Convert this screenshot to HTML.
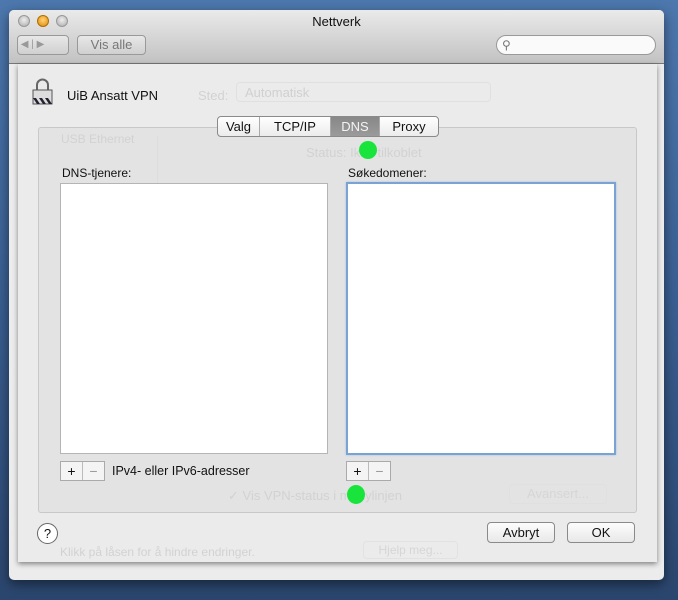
<!DOCTYPE html><html><head><meta charset="utf-8"><style>
*{box-sizing:border-box}body{margin:0;width:678px;height:600px;overflow:hidden;background:linear-gradient(#4d78ae,#3a5f92 50%,#2b466e);font-family:"Liberation Sans",sans-serif;font-size:12px;color:#111;position:relative}
.a{position:absolute}
.win{left:9px;top:10px;width:655px;height:570px;background:#ececec;border-radius:5px;overflow:hidden;box-shadow:0 4px 12px rgba(0,0,0,.5)}
.tb{left:0;top:0;width:655px;height:54px;background:linear-gradient(#eaeaea,#c2c2c2);border-bottom:1px solid #777}
.dot{width:12px;height:12px;border-radius:50%;top:5px;background:radial-gradient(circle at 50% 40%,#eee,#aaa);border:1px solid #999}
.btn{background:linear-gradient(#fdfdfd,#e8e8e8);border:1px solid #8a8a8a;border-radius:4px;text-align:center}
.faint{color:#d2d2d2}
</style></head><body>
<div class="a win">
 <div class="a tb">
  <div class="a dot" style="left:9px"></div>
  <div class="a dot" style="left:28px;background:radial-gradient(circle at 50% 40%,#ffd27a,#e08a00);border-color:#b06d00"></div>
  <div class="a dot" style="left:47px"></div>
  <div class="a" style="left:0;width:655px;top:4px;text-align:center;font-size:13px">Nettverk</div>
  <div class="a" style="left:8px;top:25px;width:52px;height:20px;border:1px solid #999;border-radius:4px;background:linear-gradient(#e8e8e8,#d0d0d0);color:#999;font-size:10px;line-height:18px">&nbsp;◀ | ▶</div>
  <div class="a" style="left:68px;top:25px;width:69px;height:20px;border:1px solid #999;border-radius:4px;background:linear-gradient(#e8e8e8,#d0d0d0);color:#777;font-size:13px;line-height:18px;text-align:center">Vis alle</div>
  <div class="a" style="left:487px;top:25px;width:160px;height:20px;border:1px solid #999;border-radius:10px;background:#fafafa;color:#777;font-size:12px;line-height:18px;padding-left:5px">⚲</div>
 </div>
 <div class="a" style="left:9px;top:54px;width:639px;height:498px;background:#ebebeb;box-shadow:0 2px 5px rgba(0,0,0,.45)">
  <div class="a" style="left:14px;top:13px;width:21px;height:27px">
   <svg width="21" height="28"><path d="M5 13V8a5.5 5.5 0 0 1 11 0v5" fill="none" stroke="#666" stroke-width="2"/><rect x="1" y="13" width="19" height="14" fill="#ddd" stroke="#555"/><path d="M1 21l4 6h3l-4-6zm6 0l4 6h3l-4-6zm6 0l4 6h3l-4-6z" fill="#223"/></svg>
  </div>
  <div class="a" style="left:49px;top:24px;font-size:13px">UiB Ansatt VPN</div>
  <div class="a faint" style="left:180px;top:24px;font-size:13px">Sted:</div>
  <div class="a" style="left:218px;top:18px;width:255px;height:20px;border:1px solid #e0e0e0;border-radius:4px;color:#d0d0d0;font-size:13px;padding:2px 8px">Automatisk</div>
  <div class="a" style="left:20px;top:63px;width:599px;height:386px;background:#e3e3e3;border:1px solid #c8c8c8;border-radius:3px"></div>
  <div class="a faint" style="left:43px;top:68px;font-size:12px">USB Ethernet</div>
  <div class="a" style="left:20px;top:72px;width:120px;height:153px;border-right:1px solid #ddd"></div>
  <div class="a" style="left:199px;top:52px;width:222px;height:21px;border:1px solid #8a8a8a;border-radius:4px;background:linear-gradient(#fff,#ececec);display:flex;font-size:13px;line-height:19px;overflow:hidden">
   <div style="width:42px;text-align:center;border-right:1px solid #aaa">Valg</div>
   <div style="width:71px;text-align:center;border-right:1px solid #aaa">TCP/IP</div>
   <div style="width:48px;text-align:center;background:linear-gradient(#888,#9a9a9a);color:#f4f4f4">DNS</div>
   <div style="flex:1;text-align:center;border-left:1px solid #aaa">Proxy</div>
  </div>
  <div class="a faint" style="left:288px;top:81px;font-size:13px">Status: Ikke tilkoblet</div>
  <div class="a" style="left:44px;top:102px;font-size:12px">DNS-tjenere:</div>
  <div class="a" style="left:330px;top:102px;font-size:12px">Søkedomener:</div>
  <div class="a" style="left:42px;top:119px;width:268px;height:271px;background:#fff;border:1px solid #b5b5b5"></div>
  <div class="a" style="left:328px;top:118px;width:270px;height:273px;background:#fff;border:2px solid #7aa3d4;box-shadow:0 0 2px #9cc0ea"></div>
  <div class="a" style="left:42px;top:397px;width:45px;height:20px;border:1px solid #aaa;background:#f4f4f4;display:flex;font-size:14px;line-height:18px"><div style="width:22px;text-align:center;border-right:1px solid #bbb">+</div><div style="flex:1;text-align:center;color:#999">−</div></div>
  <div class="a" style="left:94px;top:400px;font-size:12.5px">IPv4- eller IPv6-adresser</div>
  <div class="a" style="left:328px;top:397px;width:45px;height:20px;border:1px solid #aaa;background:#f4f4f4;display:flex;font-size:14px;line-height:18px"><div style="width:22px;text-align:center;border-right:1px solid #bbb">+</div><div style="flex:1;text-align:center;color:#999">−</div></div>
  <div class="a faint" style="left:210px;top:424px;font-size:13px">✓ Vis VPN-status i menylinjen</div>
  <div class="a" style="left:491px;top:420px;width:98px;height:20px;border:1px solid #e0e0e0;border-radius:4px;color:#d6d6d6;font-size:13px;text-align:center;line-height:18px">Avansert...</div>
  <div class="a" style="left:19px;top:459px;width:21px;height:21px;border-radius:50%;border:1px solid #666;background:#fff;text-align:center;line-height:19px;font-size:13px">?</div>
  <div class="a btn" style="left:469px;top:458px;width:68px;height:21px;line-height:19px;font-size:13px">Avbryt</div>
  <div class="a btn" style="left:549px;top:458px;width:68px;height:21px;line-height:19px;font-size:13px">OK</div>
  <div class="a faint" style="left:42px;top:481px;font-size:12px">Klikk på låsen for å hindre endringer.</div>
  <div class="a" style="left:345px;top:477px;width:95px;height:18px;border:1px solid #e2e2e2;border-radius:4px;color:#d6d6d6;font-size:12px;text-align:center;line-height:16px">Hjelp meg...</div>
 </div>
</div>
<div class="a" style="left:359px;top:141px;width:18px;height:18px;border-radius:50%;background:#19e43c"></div>
<div class="a" style="left:347px;top:485px;width:18px;height:19px;border-radius:50%;background:#19e43c"></div>
</body></html>
